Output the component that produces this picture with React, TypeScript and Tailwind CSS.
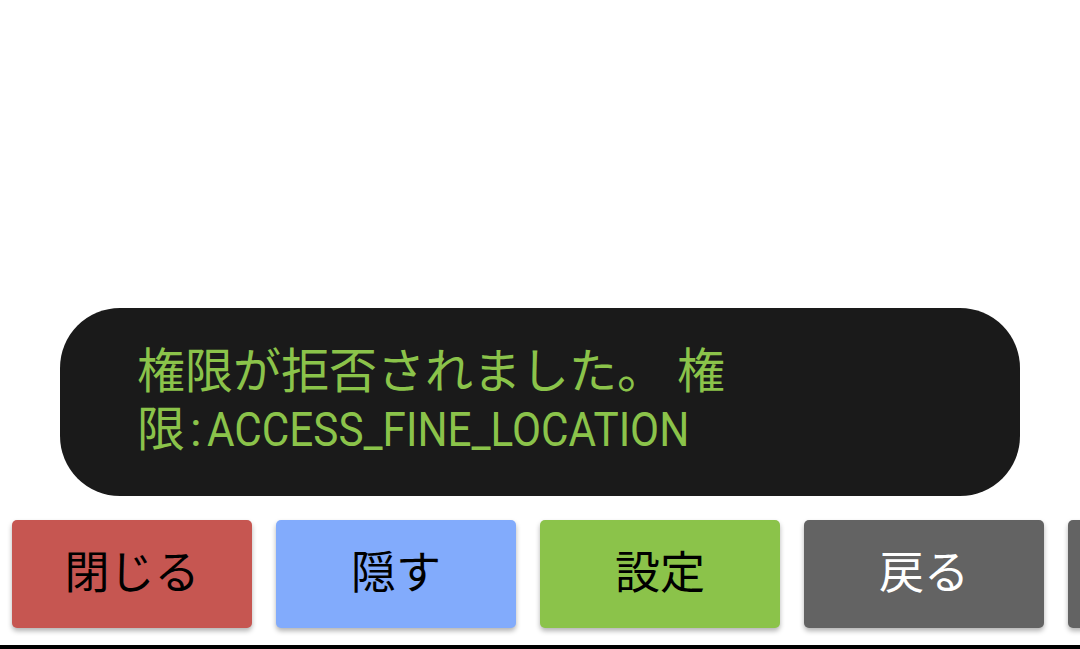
const buttons = [
  { label: '閉じる', bg: 'bg-[#c65651]', text: 'text-black' },
  { label: '隠す', bg: 'bg-[#82abfc]', text: 'text-black' },
  { label: '設定', bg: 'bg-[#8bc34a]', text: 'text-black' },
  { label: '戻る', bg: 'bg-[#636363]', text: 'text-white' },
  { label: '', bg: 'bg-[#636363]', text: 'text-white' },
];

export default function App() {
  return (
    <div className="h-[649px] w-[1080px] overflow-hidden bg-white flex flex-col justify-end font-['Roboto','Noto_Sans_CJK_JP',sans-serif]">
      <div className="mx-[60px] mb-[24px] h-[188px] rounded-[60px] bg-[#1a1a1a] flex items-center pl-[77px]">
        <p className="w-[600px] text-[48px] leading-[58px] text-[#8bc34a] -mt-[2px]">
          権限が拒否されました。 権限
          <span className="inline-block w-[500px] whitespace-nowrap">
            <span className="inline-block mx-[5px]">:</span>
            <span className="inline-block origin-left scale-x-[0.88]">ACCESS_FINE_LOCATION</span>
          </span>
        </p>
      </div>
      <div className="flex gap-[24px] pl-[12px] mb-[17px]">
        {buttons.map((b, i) => (
          <div
            key={i}
            className={`h-[108px] w-[240px] shrink-0 rounded-[5px] ${b.bg} ${b.text} flex items-center justify-center text-[45px] font-normal shadow-[0_3px_5px_rgba(0,0,0,0.3)]`}
          >
            {b.label}
          </div>
        ))}
      </div>
      <div className="h-[4px] bg-black" />
    </div>
  );
}
